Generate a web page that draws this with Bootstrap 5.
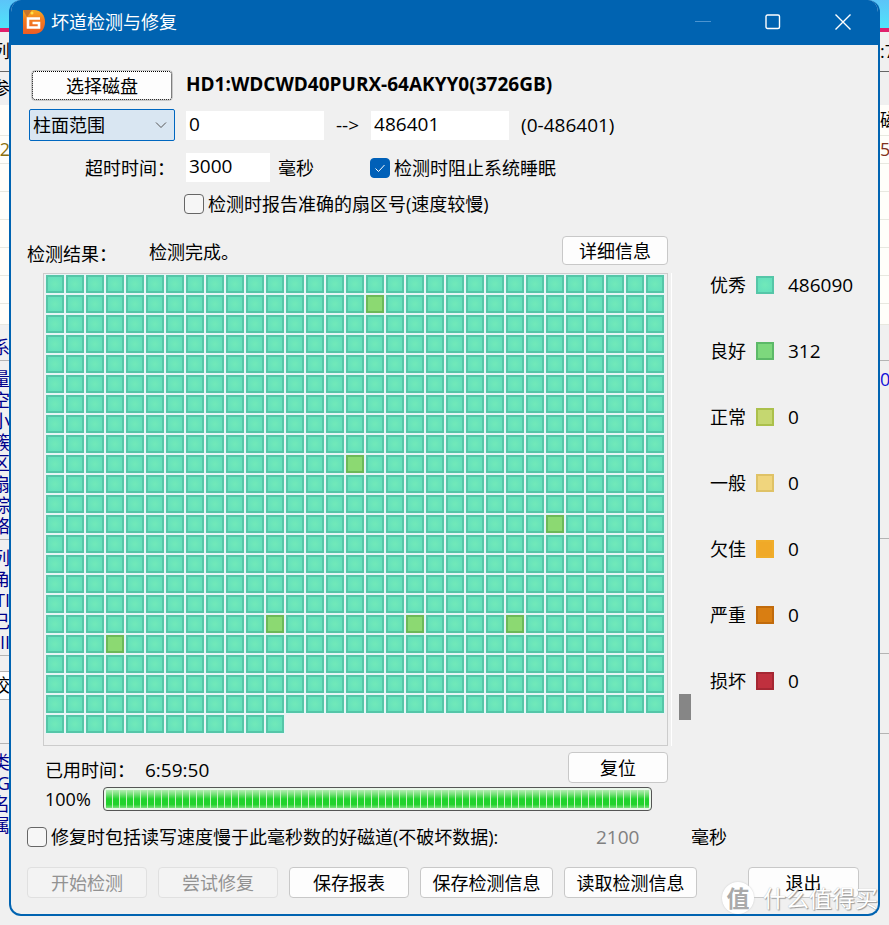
<!DOCTYPE html>
<html lang="zh-CN">
<head>
<meta charset="utf-8">
<meta name="viewport" content="width=device-width, initial-scale=1">
<title>坏道检测与修复</title>
<link href="https://cdn.jsdelivr.net/npm/bootstrap@5.3.0/dist/css/bootstrap.min.css" rel="stylesheet">
<style>
  body { font-family: "Open Sans", "Noto Sans CJK SC", sans-serif; font-size: 18px; line-height: 24px; color: #000; background: #f0f0f0; }
  .digits { font-size: 19px; }

  /* desktop behind the dialog */
  .desk { min-height: 100vh; padding: 0 9px 9px; overflow: hidden; }
  .backdrop { inset: 0; z-index: 0; }
  .edge { width: 30px; line-height: 21px; background: linear-gradient(#5cc4f8, #4fe4fa) 0 0 / 100% 28px no-repeat, #f0f0f0; }
  .edge .strip { height: 28px; padding-right: 20px; display: flex; align-items: center; justify-content: flex-end; overflow: hidden; white-space: nowrap; }
  .edge.right .strip { justify-content: flex-start; padding: 0 0 0 21px; }
  .edge .pink { height: 4px; background: #e0206c; }
  .edge .h40 { height: 40px; }
  .edge .dark-rule { border-bottom: 1px solid #666; }
  .edge .h33 { height: 33px; }
  .edge .h36 { height: 36px; padding-top: 10px; }
  .edge .row-line { background: #fffefa; border-bottom: 1px solid #e8e8e0; }
  .edge .h31 { height: 31px; padding-top: 10px; }
  .edge .h21 { height: 21px; }
  .edge .h8 { height: 8px; }
  .edge .h3 { height: 3px; }
  .edge .h178 { height: 178px; }
  .edge .h115 { height: 115px; }
  .edge .h44 { height: 44px; }
  .edge .rule { border-bottom: 1px solid #b4b4b4; }
  .edge .white { background: #fff; }
  .navy { color: #00008b; }
  .blue { color: #1010d8; }
  .maroon { color: #803020; }
  .olive { color: #8a7010; }

  /* dialog */
  .dialog { z-index: 1; background: #f0f0f0; border: 2px solid #0063b1; border-top: 0; border-radius: 12px; overflow: hidden; }
  .titlebar { height: 45px; background: #0063b1; color: #fff; padding: 0 0 2px 12px; }
  .title-text { margin-left: 6px; }
  .caption-btn { width: 70px; height: 43px; border: 0; background: none; color: #fff; padding: 0; }
  .caption-btn svg { display: block; margin: 0 auto; }
  .dialog-body { padding: 25px 19px 16px 16px; }
  .win-btn { --bs-btn-bg: #fdfdfd; --bs-btn-border-color: #c8c8c8; --bs-btn-color: #000; --bs-btn-disabled-bg: #f3f3f3; --bs-btn-disabled-border-color: #e0e0e0; --bs-btn-disabled-color: #929292; --bs-btn-disabled-opacity: 1; --bs-btn-padding-x: 0; --bs-btn-padding-y: 0; --bs-btn-font-size: 18px; --bs-btn-line-height: 24px; --bs-btn-border-radius: 4px; height: 31px; }
  .w-120 { width: 120px; }
  .w-133 { width: 133px; }
  .w-111 { width: 111px; }
  .w-100px { width: 100px; }
  .w-106 { width: 106px; height: 29px; }
  .pick { width: 142px; margin-left: 4px; }
  .focus-dots { outline: 1px dotted #000; outline-offset: -2px; }
  .lead-col { width: 159px; flex: none; }
  .lead-tick { width: 157px; flex: none; }
  .range-select { width: 146px; height: 32px; padding: 0 32px 0 3px; margin-left: 2px; font-size: 18px; line-height: 24px; color: #000; border-color: #0067c0; border-radius: 2px; background-color: #d9e6f2; background-position: right 7px center; background-size: 12px 8px; background-image: url("data:image/svg+xml,%3Csvg xmlns='http://www.w3.org/2000/svg' viewBox='0 0 12 8'%3E%3Cpath d='M1 1.5l5 5 5-5' fill='none' stroke='%23555'/%3E%3C/svg%3E"); }
  .flat-input { height: 29px; padding: 0 3px 3px; border: 0; border-radius: 0; font-size: 19px; line-height: 24px; color: #000; background: #fff; }
  .w-138 { width: 138px; }
  .w-84 { width: 84px; }
  .arrow { padding: 0 12px; }
  .tick { width: 20px; height: 20px; margin: 0 !important; border: 1px solid #666; border-radius: 4px !important; background-color: #f6f6f6; flex: none; }
  .tick:checked { background-color: #0060b8; border-color: #0060b8; background-size: 16px 16px; background-image: url("data:image/svg+xml,%3Csvg xmlns='http://www.w3.org/2000/svg' viewBox='0 0 16 16'%3E%3Cpath d='M3.500 8.500l3 3 6-6.500' fill='none' stroke='%23fff'/%3E%3C/svg%3E"); }
  .pe-11 { padding-right: 11px; }
  .ps-10 { padding-left: 10px; }
  .gap-11 { gap: 11px; }
  .pt-2px { padding-top: 2px; }
  .pt-6 { padding-top: 6px; }
  .mt-6 { margin-top: 6px; }
  .mt-7 { margin-top: 7px; }
  .mt-10 { margin-top: 10px; }
  .mt-12 { margin-top: 12px; }
  .mt-14 { margin-top: 14px; }
  .mt-18 { margin-top: 18px; }

  /* block map */
  .map { margin-left: 16px; min-height: 473px; padding: 1px 2px; border: 1px solid #ccc; box-shadow: 3px 0 #f0f0f0, 4px 0 #fff; }
  .map-grid { display: grid; grid-template-columns: repeat(auto-fill, 18px); gap: 2px; justify-content: start; }
  .block { width: 18px; height: 18px; border: 2px solid var(--edge); background: var(--fill); flex: none; }
  .map .block { box-shadow: 0 0 0 1px #e6f5f6; }
  .b-excellent { --edge: #55c6a8; --fill: radial-gradient(#71e9b9, #62dfbd); }
  .b-mapgood { --edge: #6cb958; --fill: #8cd972; }
  .b-good { --edge: #5cb968; --fill: #7dd87d; }
  .b-normal { --edge: #abc04b; --fill: #c5d770; }
  .b-fair { --edge: #dfc266; --fill: #f0d57d; }
  .b-poor { --edge: #f0ad2a; --fill: #f0a928; }
  .b-severe { --edge: #c16b0c; --fill: #d97e12; }
  .b-bad { --edge: #a52733; --fill: #c0303e; }
  .side { width: 191px; flex: none; padding-top: 37px; padding-left: 42px; }
  .legend { row-gap: 42px; }
  .legend .block { margin: 0 14px 0 10px; }
  .thumb { left: 11px; top: 458px; width: 12px; height: 26px; background: #868686; }

  .meter { height: 24px; margin-right: 16px; padding: 2px; border: 1px solid #555; border-radius: 4px; background: #e9f7e9; }
  .meter .progress-bar { background: repeating-linear-gradient(90deg, transparent 0 6px, #c4f4bf 6px 7px), linear-gradient(#b5eeb4, #70e074 25%, #1fd32c 50%, #22d22c 80%, #7be17c); }
  .ml-18 { margin-left: 18px; }
  .limit { width: 95px; color: #808080; }
  .unit { width: 168px; }

  .watermark { right: 0; bottom: 0; color: #fff; font-size: 23px; line-height: 32px; text-shadow: 1px 1px 1px #999, 0 0 1px #aaa; pointer-events: none; }
  .watermark .seal { width: 32px; height: 32px; border-radius: 50%; background: #fff; color: #aaa; font-weight: 700; text-shadow: none; text-align: center; margin-right: 9px; box-shadow: 0 0 2px #ccc; }
</style>
<script src="https://cdn.jsdelivr.net/npm/bootstrap@5.3.0/dist/js/bootstrap.bundle.min.js"></script>
</head>
<body>
<div class="desk position-relative">
  <div class="backdrop position-absolute d-flex justify-content-between" aria-hidden="true">
    <div class="edge left">
      <div class="strip"></div><div class="pink"></div>
      <div class="strip h40 dark-rule">列</div>
      <div class="strip h33">参</div>
      <div class="strip row-line h31"></div>
      <div class="strip row-line olive">2</div>
      <div class="strip row-line"></div><div class="strip row-line"></div><div class="strip row-line"></div><div class="strip row-line"></div><div class="strip row-line"></div>
      <div class="strip row-line h21"></div>
      <div class="strip h36 rule navy">系</div>
      <div class="strip h8"></div>
      <div class="strip h21 navy">量</div><div class="strip h21 navy">空</div><div class="strip h21 navy">小</div><div class="strip h21 navy">簇</div><div class="strip h21 navy">区</div><div class="strip h21 navy">扇</div><div class="strip h21 navy">D踪</div><div class="strip h21 navy">络</div>
      <div class="strip h3 rule"></div>
      <div class="strip h21 navy">列</div><div class="strip h21 navy">T角</div><div class="strip h21 navy">TI</div><div class="strip h21 navy">己</div><div class="strip h21 navy">II</div>
      <div class="strip h3 rule"></div><div class="strip h8 rule"></div>
      <div class="strip white rule">校</div>
      <div class="strip h44 rule"></div><div class="strip h8"></div>
      <div class="strip h21 navy">类</div><div class="strip h21 navy">G</div><div class="strip h21 navy">名</div><div class="strip h21 navy">属</div>
    </div>
    <div class="edge right">
      <div class="strip"></div><div class="pink"></div>
      <div class="strip h40 dark-rule">:7</div>
      <div class="strip h33"></div>
      <div class="strip row-line h31">磁</div>
      <div class="strip row-line maroon">5</div>
      <div class="strip row-line"></div><div class="strip row-line"></div><div class="strip row-line"></div><div class="strip row-line"></div><div class="strip row-line"></div>
      <div class="strip row-line h21"></div>
      <div class="strip h36 rule"></div>
      <div class="strip h178 rule align-items-start pt-2 blue">0</div>
      <div class="strip h115 rule"></div>
      <div class="strip h36"></div>
      <div class="strip h44 rule"></div>
    </div>
  </div>

  <main class="dialog position-relative">
    <header class="titlebar d-flex align-items-center">
      <svg width="22" height="24" viewBox="0 0 22 24" aria-hidden="true">
        <defs><linearGradient id="flame" x2="0" y2="1"><stop stop-color="#f6ad20"/><stop offset=".4" stop-color="#f37c20"/><stop offset="1" stop-color="#ee5c25"/></linearGradient></defs>
        <path d="M0 0H11C18 0 22 5 22 12S18 24 11 24H0Z" fill="url(#flame)"/>
        <path d="M0 0H9L4 7Z" fill="#c9752c"/><circle cx="9" cy="3" r="1.500" fill="#ffe04a"/>
        <path d="M17 8.500H5V17.500H16V13H9.500" fill="none" stroke="#fff" stroke-width="2.600"/>
      </svg>
      <span class="title-text flex-grow-1">坏道检测与修复</span>
      <button type="button" class="caption-btn" aria-label="最小化"><svg width="16" height="16"><path d="M0 7.500H16" stroke="#4c94d0"/></svg></button>
      <button type="button" class="caption-btn" aria-label="最大化"><svg width="16" height="16"><rect x="1" y="1" width="13.500" height="13.500" rx="1.500" fill="none" stroke="#fff" stroke-width="1.400"/></svg></button>
      <button type="button" class="caption-btn" aria-label="关闭"><svg width="16" height="16"><path d="M.5.5l15 15M15.500.5l-15 15" stroke="#fff" stroke-width="1.400"/></svg></button>
    </header>

    <form class="dialog-body position-relative">
      <div class="d-flex mb-2">
        <div class="lead-col"><button type="button" class="btn win-btn pick focus-dots">选择磁盘</button></div>
        <strong class="digits pt-2px">HD1:WDCWD40PURX-64AKYY0(3726GB)</strong>
      </div>
      <div class="d-flex align-items-center">
        <div class="lead-col"><select class="form-select range-select" aria-label="范围类型"><option>柱面范围</option></select></div>
        <input class="form-control flat-input w-138" aria-label="起始柱面" value="0">
        <span class="arrow digits">--&gt;</span>
        <input class="form-control flat-input w-138" aria-label="结束柱面" value="486401">
        <span class="ms-2 ps-1 digits">(0-486401)</span>
      </div>
      <div class="d-flex align-items-center mt-12">
        <label class="lead-col text-end pe-11" for="timeout">超时时间：</label>
        <input id="timeout" class="form-control flat-input w-84" value="3000">
        <span class="ms-2">毫秒</span>
        <div class="d-flex align-items-center ms-5 ps-2">
          <input class="form-check-input tick" type="checkbox" id="nosleep" checked><label class="ps-1" for="nosleep">检测时阻止系统睡眠</label>
        </div>
      </div>
      <div class="d-flex align-items-center mt-10">
        <span class="lead-tick"></span>
        <input class="form-check-input tick" type="checkbox" id="exact"><label class="ps-1" for="exact">检测时报告准确的扇区号(速度较慢)</label>
      </div>

      <div class="d-flex pt-3 mt-1">
        <section class="flex-grow-1">
          <div class="d-flex">
            <span class="pt-6">检测结果：</span>
            <span class="ms-4 ps-2 pt-1">检测完成。</span>
            <button type="button" class="btn win-btn w-106 ms-auto">详细信息</button>
          </div>
          <div class="map mt-7"><div class="map-grid" id="map"></div></div>
          <div class="d-flex mt-6 ml-18">
            <span class="pt-6">已用时间：</span><span class="ps-10 pt-6 digits">6:59:50</span>
            <button type="button" class="btn win-btn w-100px ms-auto">复位</button>
          </div>
          <div class="d-flex align-items-center mt-1 ml-18">
            <span class="me-2 pe-1">100%</span>
            <div class="progress meter flex-grow-1" role="progressbar" aria-label="进度" aria-valuenow="100" aria-valuemin="0" aria-valuemax="100"><div class="progress-bar w-100"></div></div>
          </div>
        </section>
        <aside class="side position-relative">
          <div class="legend d-grid" id="legend"></div>
          <div class="thumb position-absolute"></div>
        </aside>
      </div>

      <div class="d-flex align-items-center mt-14">
        <input class="form-check-input tick" type="checkbox" id="slow"><label class="ps-1" for="slow">修复时包括读写速度慢于此毫秒数的好磁道(不破坏数据):</label>
        <span class="ms-auto limit digits">2100</span>
        <span class="unit">毫秒</span>
      </div>
      <div class="d-flex gap-11 mt-18">
        <button type="button" class="btn win-btn w-120" disabled>开始检测</button>
        <button type="button" class="btn win-btn w-120" disabled>尝试修复</button>
        <button type="button" class="btn win-btn w-120">保存报表</button>
        <button type="button" class="btn win-btn w-133">保存检测信息</button>
        <button type="button" class="btn win-btn w-133">读取检测信息</button>
        <button type="button" class="btn win-btn w-111 ms-auto">退出</button>
      </div>
      <div class="watermark position-absolute d-flex"><span class="seal">值</span><span>什么值得买</span></div>
    </form>
  </main>
</div>
<script>
  const slower = new Set([47, 294, 397, 538, 545, 550, 561]);
  document.getElementById('map').innerHTML = Array.from({ length: 694 }, (_, i) =>
    `<span class="block ${slower.has(i) ? 'b-mapgood' : 'b-excellent'}"></span>`).join('');
  const grades = [['优秀', 'excellent', 486090], ['良好', 'good', 312], ['正常', 'normal', 0], ['一般', 'fair', 0], ['欠佳', 'poor', 0], ['严重', 'severe', 0], ['损坏', 'bad', 0]];
  document.getElementById('legend').innerHTML = grades.map(([name, key, n]) =>
    `<div class="d-flex align-items-center"><span>${name}</span><span class="block b-${key}"></span><span class="digits">${n}</span></div>`).join('');
</script>
</body>
</html>
